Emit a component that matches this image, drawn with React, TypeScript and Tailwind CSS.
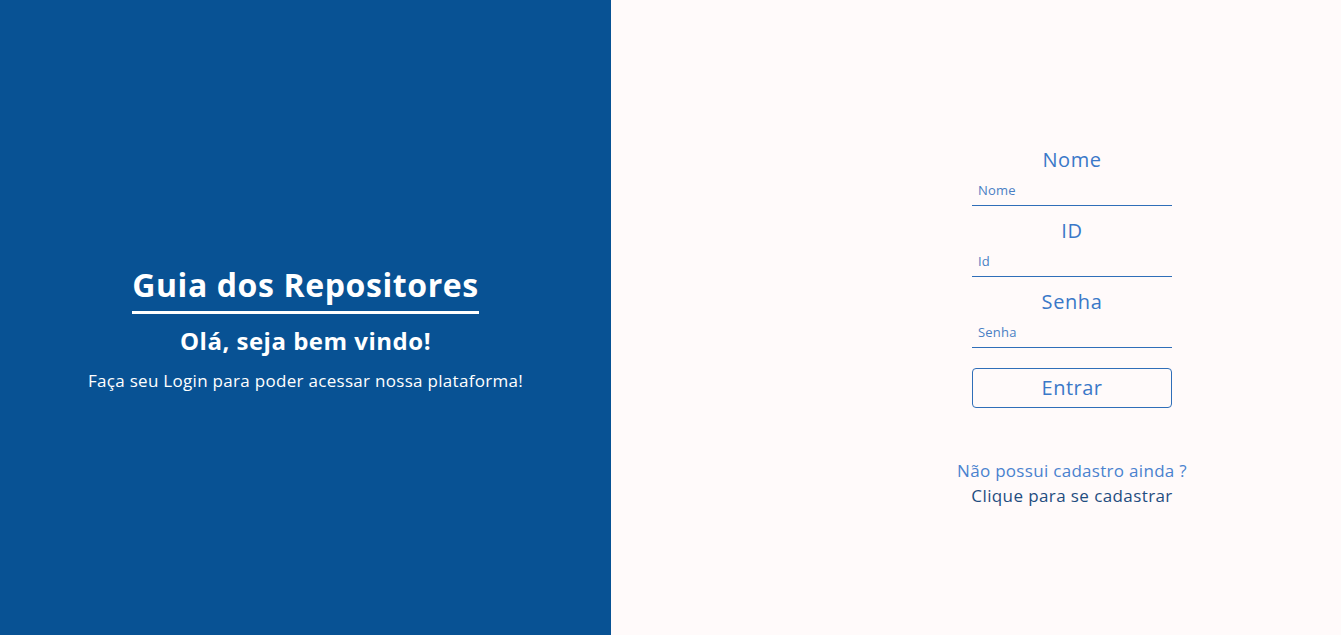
export default function App() {
  const fields = [
    { label: "Nome", placeholder: "Nome", type: "text" },
    { label: "ID", placeholder: "Id", type: "text" },
    { label: "Senha", placeholder: "Senha", type: "password" },
  ];

  return (
    <div
      className="flex h-[635px] w-full"
      style={{ fontFamily: '"Open Sans", "Noto Sans", sans-serif' }}
    >
      <section className="flex w-[611px] shrink-0 flex-col items-center justify-center bg-[#085294] pt-[20px] text-white">
        <h1 className="border-b-[3px] border-white pb-[4px] text-[32px] font-bold leading-[44px] tracking-[0.6px]">
          Guia dos Repositores
        </h1>
        <h2 className="mt-[11px] text-[24px] font-bold leading-[32px] tracking-[0.5px]">
          Olá, seja bem vindo!
        </h2>
        <p className="mt-[12px] text-[17px] leading-[24px] tracking-[0.3px]">
          Faça seu Login para poder acessar nossa plataforma!
        </p>
      </section>

      <section className="flex flex-1 items-center justify-center bg-[#fffafa] pl-[192px] pt-[20px]">
        <form className="flex w-[200px] flex-col items-center">
          {fields.map((f) => (
            <div key={f.label} className="mb-[12px] flex w-full flex-col items-center">
              <label className="text-[20px] leading-[26px] tracking-[0.6px] text-[#3a78c8]">
                {f.label}
              </label>
              <input
                type={f.type}
                placeholder={f.placeholder}
                className="h-[33px] w-full border-b border-[#2f6eb8] bg-transparent px-[6px] pt-[1px] text-[13px] tracking-[0.2px] text-[#3a78c8] outline-none placeholder:text-[#4a7fc4]"
              />
            </div>
          ))}
          <button
            type="button"
            className="mt-[8px] h-[40px] w-full rounded-[4px] border border-[#2f6eb8] text-[20px] tracking-[0.5px] text-[#3a78c8]"
          >
            Entrar
          </button>
          <p className="mt-[50px] whitespace-nowrap text-[17px] leading-[25px] tracking-[0.3px] text-[#4a82cf]">
            Não possui cadastro ainda ?
          </p>
          <a className="whitespace-nowrap text-[17px] leading-[25px] tracking-[0.4px] text-[#1f4d80]">
            Clique para se cadastrar
          </a>
        </form>
      </section>
    </div>
  );
}
